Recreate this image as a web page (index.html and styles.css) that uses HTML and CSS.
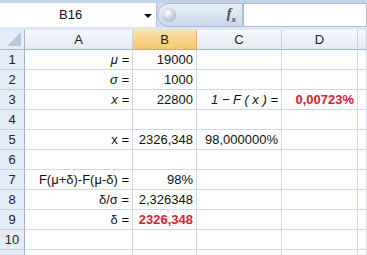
FILE: index.html
```html
<!DOCTYPE html>
<html lang="en">
<head>
    <meta charset="UTF-8">
    <title>Sheet</title>
    <link rel="stylesheet" href="styles.css">
</head>
<body>
    <div class="formula-bar">
        <div class="name-box">
            <span class="name">B16</span>
            <span class="arrow"></span>
        </div>
        <div class="capsule">
            <span class="knob"></span>
            <span class="fx">f<sub>x</sub></span>
        </div>
        <div class="input"></div>
    </div>

    <div class="sheet">
        <div class="corner"><span class="tri"></span></div>
        <div class="col">A</div>
        <div class="col sel">B</div>
        <div class="col">C</div>
        <div class="col">D</div>
        <div class="col last"></div>

        <div class="row">1</div>
        <div class="cell r math">μ =</div>
        <div class="cell r">19000</div>
        <div class="cell"></div>
        <div class="cell"></div>
        <div class="cell"></div>

        <div class="row">2</div>
        <div class="cell r math">σ =</div>
        <div class="cell r">1000</div>
        <div class="cell"></div>
        <div class="cell"></div>
        <div class="cell"></div>

        <div class="row">3</div>
        <div class="cell r math">x =</div>
        <div class="cell r">22800</div>
        <div class="cell r math">1 − F ( x ) =</div>
        <div class="cell r red">0,00723%</div>
        <div class="cell"></div>

        <div class="row">4</div>
        <div class="cell"></div>
        <div class="cell"></div>
        <div class="cell"></div>
        <div class="cell"></div>
        <div class="cell"></div>

        <div class="row">5</div>
        <div class="cell r">x =</div>
        <div class="cell r">2326,348</div>
        <div class="cell r">98,000000%</div>
        <div class="cell"></div>
        <div class="cell"></div>

        <div class="row">6</div>
        <div class="cell"></div>
        <div class="cell"></div>
        <div class="cell"></div>
        <div class="cell"></div>
        <div class="cell"></div>

        <div class="row">7</div>
        <div class="cell r">F(μ+δ)-F(μ-δ) =</div>
        <div class="cell r">98%</div>
        <div class="cell"></div>
        <div class="cell"></div>
        <div class="cell"></div>

        <div class="row">8</div>
        <div class="cell r">δ/σ =</div>
        <div class="cell r">2,326348</div>
        <div class="cell"></div>
        <div class="cell"></div>
        <div class="cell"></div>

        <div class="row">9</div>
        <div class="cell r">δ =</div>
        <div class="cell r red">2326,348</div>
        <div class="cell"></div>
        <div class="cell"></div>
        <div class="cell"></div>

        <div class="row">10</div>
        <div class="cell"></div>
        <div class="cell"></div>
        <div class="cell"></div>
        <div class="cell"></div>
        <div class="cell"></div>

        <div class="row"></div>
        <div class="cell"></div>
        <div class="cell"></div>
        <div class="cell"></div>
        <div class="cell"></div>
        <div class="cell"></div>
    </div>
</body>
</html>
```

FILE: styles.css
```css
* {
    margin: 0;
    padding: 0;
    box-sizing: border-box;
}

body {
    width: 367px;
    height: 255px;
    overflow: hidden;
    background: #fff;
    font-family: "Liberation Sans", Arial, sans-serif;
    font-size: 13px;
    color: #111;
}

/* formula bar */
.formula-bar {
    display: flex;
    height: 30px;
    background: #cfdcec;
    border-top: 3px solid #c3d3e8;
    border-bottom: 3px solid #dde6f2;
}

.name-box {
    position: relative;
    width: 157px;
    background: #fff;
    border-right: 1px solid #b8c6d8;
}

.name {
    display: block;
    line-height: 24px;
    padding-left: 59px;
    font-size: 13px;
}

.arrow {
    position: absolute;
    left: 144px;
    top: 11px;
    border-left: 4px solid transparent;
    border-right: 4px solid transparent;
    border-top: 4px solid #111;
}

.capsule {
    display: flex;
    align-items: center;
    justify-content: space-between;
    width: 86px;
    padding: 0 6px 0 4px;
    background: linear-gradient(#e8eff8, #c9d8eb);
    border: 1px solid #a9bcd4;
    border-radius: 12px 0 0 12px;
}

.knob {
    width: 14px;
    height: 14px;
    border-radius: 50%;
    background: radial-gradient(circle at 40% 35%, #fff, #b5bfcb 70%);
}

.fx {
    font-family: "Liberation Serif", serif;
    font-style: italic;
    font-weight: bold;
    font-size: 14px;
    color: #4a4a4a;
}

.fx sub {
    font-size: 9px;
}

.input {
    flex: 1;
    background: #fff;
    border: 1px solid #a9bcd4;
}

/* grid */
.sheet {
    display: grid;
    grid-template-columns: 25px 108px 64px 85px 76px 1fr;
    grid-auto-rows: 20px;
}

.corner {
    position: relative;
    background: #e4ecf7;
    border-right: 1px solid #9eb6ce;
    border-bottom: 1px solid #9eb6ce;
}

.tri {
    position: absolute;
    right: 3px;
    bottom: 3px;
    border-left: 14px solid transparent;
    border-bottom: 14px solid #b6c9e0;
}

.col {
    text-align: center;
    line-height: 19px;
    background: linear-gradient(#f6f8fc, #e4eaf3);
    border-right: 1px solid #c5d1de;
    border-bottom: 1px solid #9eb6ce;
    color: #222;
}

.col.sel {
    background: linear-gradient(#fbe1ac, #f6c66b);
    border-bottom: 1px solid #e2a94a;
    border-right: 1px solid #e5b466;
}

.row {
    text-align: center;
    line-height: 19px;
    background: #e4ecf7;
    border-right: 1px solid #9eb6ce;
    border-bottom: 1px solid #c5d1de;
    color: #222;
}

.cell {
    line-height: 19px;
    padding: 0 3px;
    border-right: 1px solid #d0d7e5;
    border-bottom: 1px solid #d0d7e5;
    white-space: nowrap;
}

.r {
    text-align: right;
}

.math {
    font-style: italic;
}

.red {
    color: #e0202e;
    font-weight: bold;
}
```
